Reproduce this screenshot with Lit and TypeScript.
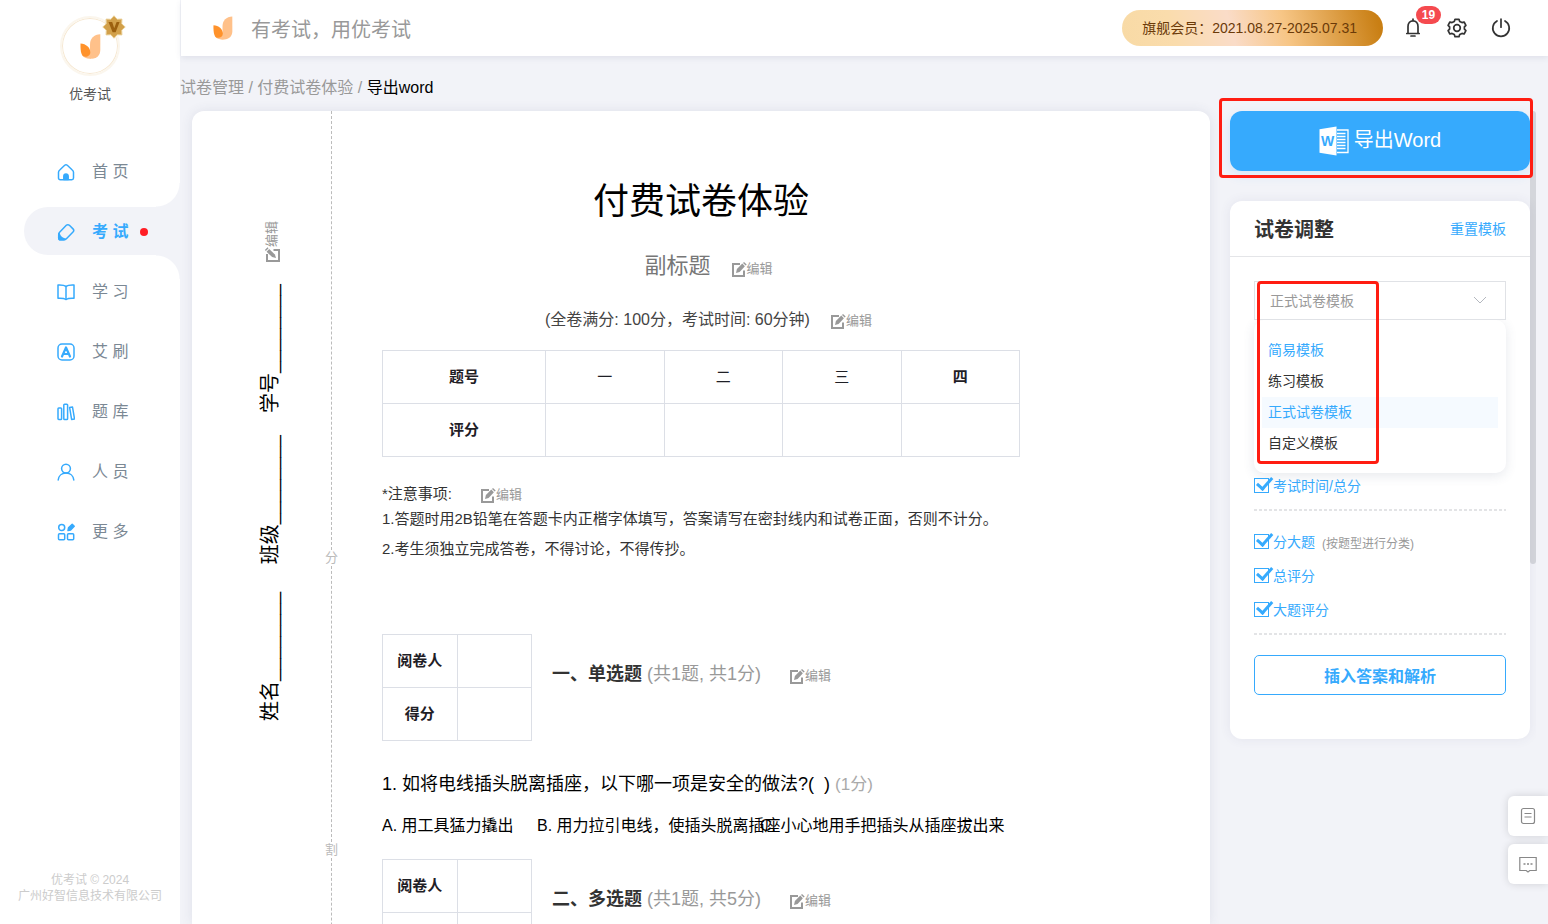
import { LitElement, html, svg, css, nothing } from "lit";
import { customElement, property } from "lit/decorators.js";
import { classMap } from "lit/directives/class-map.js";

const petals = svg`
  <path d="M20.300 0.300C14 0.500 10 4.500 10 10.500V24.500C16 25.500 20.300 21.500 20.300 16Z" fill="#ffc18a"/>
  <path d="M2 21C4 24 7 25 11 24.700L11 17Z" fill="#ffc18a"/>
  <path d="M0.500 9.500C6 9.800 10.300 13.500 10.300 18.500C10.300 21 8 22.800 5.500 22.800C1.500 22.800 0.300 18.500 0.500 9.500Z" fill="#ff922b"/>`;

const navIcons: Record<string, unknown> = {
  home: svg`<path d="M3 6.700L7.700 2.300c.8-.7 1.800-.7 2.600 0L15 6.700c.9.800 1.500 1.500 1.500 2.600V15c0 1-.8 1.700-1.700 1.700H3.200c-.9 0-1.700-.7-1.700-1.700V9.300C1.500 8.200 2.100 7.500 3 6.700z"/><path d="M6.800 16.500v-3.300a2.200 2.200 0 0 1 4.400 0v3.300z" fill="currentColor"/>`,
  exam: svg`<path d="M9.300 2.300c.9-.9 2.200-.9 3.100 0l3.600 3.600c.9.900.9 2.200 0 3.100l-6.600 6.800c-.7.700-1.500 1-2.400 1H3.800c-1.200 0-2.100-.9-2.100-2.100v-3.200c0-.9.3-1.600.9-2.200z"/><path d="M2 10.500c1 3.200 2.700 5 6.200 5.700-.6.500-1 .6-1.600.6H3.800c-1.200 0-2.100-.9-2.100-2.100z" fill="currentColor"/>`,
  learn: svg`<path d="M9 3.400C7.500 2.200 5 1.800 1 2v13.200c3.500-.2 6.200 0 8 1.300c1.800-1.300 4.500-1.500 8-1.300V2c-4-.2-6.500.2-8 1.400z"/><path d="M9 3.400V16.500"/>`,
  brush: svg`<rect x="1" y="1" width="16" height="16" rx="4"/><path d="M5 13.500L9 4.500l4 9M6.500 11h5" stroke-width="2.200"/>`,
  bank: svg`<rect x="1" y="5" width="3.600" height="11.500" rx=".8"/><rect x="6.800" y="1.200" width="3.800" height="15.300" rx=".8"/><path d="M12.600 4.400l2.900-.4 2 11.900-2.900.5z"/>`,
  people: svg`<circle cx="9" cy="5.600" r="4.400"/><path d="M1.200 17c.4-4 3.500-7 7.800-7s7.400 3 7.800 7"/>`,
  more: svg`<circle cx="4.700" cy="4.600" r="3"/><rect x="1.500" y="10.700" width="6.200" height="6" rx="1"/><rect x="10.500" y="10.700" width="6.200" height="6" rx="1"/><path d="M11 7.600l.5-2.800 3.700-3.500 2 2-3.600 3.700z" fill="currentColor"/>`,
};

const navItems = [
  ["home", "首 页"], ["exam", "考 试"], ["learn", "学 习"], ["brush", "艾 刷"],
  ["bank", "题 库"], ["people", "人 员"], ["more", "更 多"],
];

const base = css`
  * { box-sizing: border-box; }
  button { font: inherit; color: inherit; border: 0; background: none; padding: 0; cursor: pointer; }
  a { text-decoration: none; color: inherit; }
`;

@customElement("edit-button")
class EditButton extends LitElement {
  static styles = [base, css`
    :host { display: inline-block; font-size: 13px; line-height: 16px; color: #999; }
    :host(.turned) .icon { transform: rotate(90deg); }
    .edit { display: block; }
    .icon { width: 16px; height: 16px; vertical-align: -4px; }
  `];
  render() {
    return html`<button class="edit" type="button"><svg class="icon" viewBox="0 0 16 16" fill="none" stroke="currentColor" stroke-width="2"><path d="M9 3H2V15H13V9.500"/><path d="M5 12l.9-3.900L11.300 2.600l2.600 2.600L8.600 10.900z" fill="currentColor" stroke="none"/><path d="M12 1.900l1-1 2.700 2.600-1 1z" fill="currentColor" stroke="none"/></svg>编辑</button>`;
  }
}

@customElement("side-bar")
class SideBar extends LitElement {
  static styles = [base, css`
    :host { display: flex; flex-direction: column; background: #fff; }
    .brand { display: flex; flex-direction: column; align-items: center; padding-top: 16px; }
    .avatar { position: relative; width: 60px; height: 60px; border-radius: 50%; border: 2px solid #fbf6ed; box-shadow: inset 0 0 0 1px #f6e8d2; display: grid; place-items: center; }
    .flame { width: 21px; height: 25px; }
    .medal { position: absolute; right: -8px; top: -3px; width: 24px; height: 24px; }
    .name { margin-top: 8px; font-size: 14px; line-height: 20px; color: #555; }
    .nav { margin-top: 43px; display: flex; flex-direction: column; gap: 12px; flex: 1; }
    .item { position: relative; display: flex; align-items: center; height: 48px; margin-left: 24px; padding-left: 33px; font-size: 16px; color: #7b8894; }
    .icon { width: 18px; height: 18px; margin: 2px 17px 0 0; color: #36aafd; fill: none; stroke: currentColor; stroke-width: 1.5; stroke-linejoin: round; stroke-linecap: round; }
    .label { padding-bottom: 2px; }
    .active { background: #f2f3f8; border-radius: 24px 0 0 24px; color: #36aafd; font-weight: bold; }
    .active::before, .active::after { content: ""; position: absolute; right: 0; width: 24px; height: 24px; }
    .active::before { bottom: 100%; background: radial-gradient(circle at 0 0, transparent 23px, #f2f3f8 24px); }
    .active::after { top: 100%; background: radial-gradient(circle at 0 100%, transparent 23px, #f2f3f8 24px); }
    .dot { width: 8px; height: 8px; margin: 2px 0 0 12px; border-radius: 50%; background: #ff1d25; }
    .foot { padding-bottom: 20px; text-align: center; font-size: 12px; line-height: 16px; color: #ccc; }
  `];
  render() {
    return html`
      <div class="brand">
        <div class="avatar">
          <svg class="flame" viewBox="0 0 21 25">${petals}</svg>
          <svg class="medal" viewBox="0 0 24 24">
            <path d="M12 .8l3.200 3.500 4.700-.2-.2 4.700 3.500 3.200-3.500 3.200.2 4.700-4.700-.2-3.200 3.500-3.200-3.500-4.700.2.2-4.700L.8 12l3.500-3.200-.2-4.700 4.700.2z" fill="#d2a04a" stroke="#e8cc90"/>
            <path d="M6.500 7h3.700l2 6.200 2.400-6.200h3l-4 10.200h-3z" fill="#9c600f"/>
          </svg>
        </div>
        <div class="name">优考试</div>
      </div>
      <nav class="nav">
        ${navItems.map(([id, label]) => html`
          <a href="#" class=${classMap({ item: true, active: id === "exam" })}>
            <svg class="icon" viewBox="0 0 18 18">${navIcons[id]}</svg><span class="label">${label}</span>
            ${id === "exam" ? html`<span class="dot"></span>` : nothing}
          </a>`)}
      </nav>
      <div class="foot">优考试 © 2024<br>广州好智信息技术有限公司</div>`;
  }
}

@customElement("top-bar")
class TopBar extends LitElement {
  static styles = [base, css`
    :host { display: flex; align-items: center; height: 56px; margin-left: 1px; padding: 0 37px 0 32px; background: #fff; box-shadow: 0 2px 6px rgba(60, 70, 110, 0.1); position: relative; }
    .logo { width: 20px; height: 24px; }
    .slogan { margin-left: 18px; font-size: 20px; color: #999; flex: 1; }
    .vip { height: 36px; line-height: 37px; padding: 0 26px 0 20px; border-radius: 18px; font-size: 14px; color: #6b3a08; background: linear-gradient(75deg, #f8daa5, #fadcac 20%, #fadcc8 42%, #f7c686 62%, #c97f14 97%); }
    .tools { display: flex; align-items: center; gap: 24px; margin-left: 20px; }
    .tool { position: relative; display: block; width: 20px; height: 20px; color: #333; }
    .glyph { width: 20px; height: 20px; fill: none; stroke: currentColor; stroke-width: 1.7; stroke-linecap: round; stroke-linejoin: round; display: block; }
    .count { position: absolute; left: 13px; top: -12px; width: 25px; height: 18px; border-radius: 9px; background: #f54a4f; color: #fff; font-size: 12px; line-height: 18px; font-weight: bold; }
  `];
  render() {
    return html`
      <svg class="logo" viewBox="0 0 21 25">${petals}</svg>
      <div class="slogan">有考试，用优考试</div>
      <div class="vip">旗舰会员：2021.08.27-2025.07.31</div>
      <div class="tools">
        <button class="tool" type="button" aria-label="通知"><svg class="glyph" viewBox="0 0 20 20"><path d="M10 1v1.800M3.800 15.500h12.400M5 15.500V8.500c0-3.300 2.200-5.700 5-5.700s5 2.400 5 5.700v7M8 18h4"/></svg><span class="count">19</span></button>
        <button class="tool" type="button" aria-label="设置"><svg class="glyph" viewBox="0 0 20 20"><circle cx="10" cy="10" r="3.300"/><path d="M8 1.300h4l.7 2.100 2.300 1.200 2.100-.6 1.800 3.300-1.500 1.600v2.200l1.500 1.600-1.800 3.300-2.100-.6-2.300 1.200-.7 2.100H8l-.7-2.100L5 15.400l-2.100.6-1.800-3.300 1.500-1.600V8.900L1.100 7.300 2.900 4l2.100.6 2.300-1.200z"/></svg></button>
        <button class="tool" type="button" aria-label="退出"><svg class="glyph" viewBox="0 0 20 20"><path d="M10 1.200v8M6 3a8.200 8.200 0 1 0 8 0"/></svg></button>
      </div>`;
  }
}

@customElement("exam-paper")
class ExamPaper extends LitElement {
  static styles = [base, css`
    :host { display: flex; background: #fff; border-radius: 12px 12px 0 0; box-shadow: 0 0 12px rgba(60, 70, 110, 0.1); color: #333; }
    .strip { flex: none; width: 132px; display: flex; flex-direction: column; align-items: center; padding: 110px 0 0 27px; }
    .turned { writing-mode: vertical-rl; text-orientation: sideways; transform: rotate(180deg); white-space: pre; }
    .fields { margin: 21px 4px 0 0; font-size: 20px; line-height: 28px; color: #000; }
    .seal { flex: none; width: 15px; display: flex; flex-direction: column; align-items: center; font-size: 13px; line-height: 16px; color: #bbb; }
    .dash { flex: none; height: 276px; border-left: 1px dashed #bbb; }
    .first { height: 439px; }
    .doc { flex: 1; min-width: 0; padding: 64px 190px 0 43px; }
    .title { margin: 0; font-size: 36px; line-height: 54px; font-weight: normal; text-align: center; color: #000; }
    .row { display: flex; align-items: baseline; justify-content: center; gap: 20px; padding-left: 15px; white-space: nowrap; }
    .sub { margin-top: 21px; font-size: 22px; line-height: 32px; color: #777; }
    .info { margin-top: 26px; font-size: 16px; line-height: 24px; color: #444; }
    .grid { width: 100%; border-collapse: collapse; table-layout: fixed; font-size: 15px; color: #1f2026; }
    .grid th, .grid td { height: 53px; padding: 0 0 4px; border: 1px solid #dcdfe6; text-align: center; }
    .summary { margin-top: 18px; }
    .lead { width: 163px; }
    .grid .plain { font-weight: normal; }
    .notes { margin-top: 27px; font-size: 15px; line-height: 30px; }
    .notes-head { display: flex; align-items: baseline; gap: 28px; line-height: 20px; }
    .line { margin: 0; }
    .section { display: flex; align-items: center; gap: 20px; margin-top: 21px; }
    .after-notes { margin-top: 70px; }
    .marks { flex: none; width: 150px; }
    .heading { display: flex; align-items: baseline; gap: 28px; font-size: 18px; line-height: 24px; padding-bottom: 28px; white-space: nowrap; }
    .name { margin: 0; font-size: 18px; font-weight: bold; }
    .pts { font-weight: normal; color: #999; }
    .question { margin: 29px 0 0; font-size: 18px; line-height: 28px; color: #000; white-space: pre; }
    .score { font-size: 17px; color: #aaa; }
    .choices { display: grid; grid-template-columns: 155px 223px auto; margin: 15px 0 0; padding: 0; list-style: none; font-size: 16px; line-height: 24px; color: #000; white-space: nowrap; }
    .choice { min-width: 0; }
  `];
  section(name: string, points: string, first: boolean) {
    return html`
      <div class=${classMap({ section: true, "after-notes": first })}>
        <table class="grid marks">
          <tr><th>阅卷人</th><td></td></tr>
          <tr><th>得分</th><td></td></tr>
        </table>
        <div class="heading"><h2 class="name">${name} <span class="pts">${points}</span></h2><edit-button></edit-button></div>
      </div>`;
  }
  render() {
    return html`
      <div class="strip">
        <edit-button class="turned"></edit-button>
        <div class="turned fields">${"姓名________     班级________    学号________"}</div>
      </div>
      <div class="seal"><i class="dash first"></i>分<i class="dash"></i>割<i class="dash"></i></div>
      <div class="doc">
        <h1 class="title">付费试卷体验</h1>
        <div class="row sub"><span>副标题</span><edit-button></edit-button></div>
        <div class="row info"><span>(全卷满分: 100分，考试时间: 60分钟)</span><edit-button></edit-button></div>
        <table class="grid summary">
          <tr><th class="lead">题号</th>${["一", "二", "三", "四"].map((n) => html`<th class=${classMap({ plain: n !== "四" })}>${n}</th>`)}</tr>
          <tr><th>评分</th><td></td><td></td><td></td><td></td></tr>
        </table>
        <div class="notes">
          <div class="notes-head"><span>*注意事项:</span><edit-button></edit-button></div>
          <p class="line">1.答题时用2B铅笔在答题卡内正楷字体填写，答案请写在密封线内和试卷正面，否则不计分。</p>
          <p class="line">2.考生须独立完成答卷，不得讨论，不得传抄。</p>
        </div>
        ${this.section("一、单选题", "(共1题, 共1分)", true)}
        <p class="question">1. 如将电线插头脱离插座，以下哪一项是安全的做法?(&nbsp; ) <span class="score">(1分)</span></p>
        <ol class="choices">
          <li class="choice">A. 用工具猛力撬出</li>
          <li class="choice">B. 用力拉引电线，使插头脱离插座</li>
          <li class="choice">C. 小心地用手把插头从插座拔出来</li>
        </ol>
        ${this.section("二、多选题", "(共1题, 共5分)", false)}
      </div>`;
  }
}

@customElement("check-row")
class CheckRow extends LitElement {
  @property() label = "";
  @property() note = "";
  static styles = [base, css`
    :host { display: block; height: 34px; }
    .row { display: flex; align-items: center; height: 24px; font-size: 14px; color: #36aafd; }
    .box { appearance: none; margin: 0 4px 0 0; width: 15px; height: 15px; border: 1px solid #36aafd; position: relative; }
    .box:checked::after { content: ""; position: absolute; left: 5px; top: -3px; width: 13px; height: 6px; border: solid #36aafd; border-width: 0 0 3px 3px; transform: rotate(-48deg); transform-origin: 50% 100%; }
    .note { margin-left: 7px; padding-top: 2px; font-size: 12px; color: #999; }
  `];
  render() {
    return html`<label class="row"><input class="box" type="checkbox" checked>${this.label}${this.note ? html`<span class="note">${this.note}</span>` : nothing}</label>`;
  }
}

@customElement("export-panel")
class ExportPanel extends LitElement {
  static styles = [base, css`
    :host { display: block; }
    .wrap { position: relative; }
    .mark { position: absolute; border: 3px solid #ff1d12; border-radius: 4px; pointer-events: none; z-index: 2; }
    .mark-export { inset: -13px -3px -7px -11px; }
    .mark-menu { left: 3px; top: 0; width: 122px; bottom: 9px; }
    .export { width: 100%; height: 60px; border-radius: 12px; background: #36aafd; color: #fff; font-size: 20px; display: flex; align-items: center; justify-content: center; gap: 5px; box-shadow: 0 4px 12px rgba(54, 170, 253, 0.16); }
    .caption { padding-bottom: 5px; }
    .word { width: 30px; height: 30px; }
    .w { font: bold 14px "Liberation Sans", sans-serif; fill: #36aafd; }
    .card { margin-top: 30px; border-radius: 12px; background: #fff; box-shadow: 0 0 12px rgba(60, 70, 110, 0.08); }
    .head { display: flex; align-items: center; justify-content: space-between; height: 56px; padding: 0 24px; border-bottom: 1px solid #e4e5e8; }
    .title { margin: 0; font-size: 20px; color: #333; }
    .reset { padding-bottom: 2px; font-size: 14px; color: #36aafd; }
    .body { padding: 24px 24px 44px; }
    .field { position: relative; display: block; }
    .select { appearance: none; display: block; width: 100%; height: 39px; padding: 0 15px; border: 1px solid #e0e2e6; border-radius: 0; background: #fff; font: inherit; font-size: 14px; color: #999; }
    .arrow { position: absolute; right: 19px; top: 14px; width: 14px; height: 10px; fill: none; stroke: #b4b8bf; pointer-events: none; }
    .menu { margin: 0; padding: 15px 8px 14px; list-style: none; border-radius: 10px; background: #fff; box-shadow: 0 3px 12px rgba(60, 70, 110, 0.12); font-size: 14px; line-height: 31px; color: #333; }
    .opt { padding-left: 6px; }
    .blue { color: #36aafd; }
    .chosen { background: #f5faff; }
    .group::after { content: ""; display: block; height: 2px; margin-top: 2px; background: repeating-linear-gradient(90deg, #e3e4e6 0 3px, transparent 3px 5px); }
    .group + .group { padding-top: 18px; }
    .insert { display: block; width: 100%; height: 40px; margin-top: 20px; border: 1px solid #36aafd; border-radius: 5px; color: #36aafd; font-size: 16px; font-weight: bold; }
  `];
  render() {
    return html`
      <div class="wrap">
        <button class="export" type="button">
          <svg class="word" viewBox="0 0 30 30">
            <path d="M0.500 3.300L17.500 .500V29.500L0.500 26.700z" fill="#fff"/>
            <path d="M18 4h11v22.500H18M18 7.500h8.500M18 10.500h8.500M18 13.500h8.500M18 16.500h8.500M18 19.500h8.500M18 22.500h8.500" fill="none" stroke="#fff" stroke-width="1.300"/>
            <text class="w" x="2" y="20">W</text>
          </svg><span class="caption">导出Word</span></button>
        <div class="mark mark-export"></div>
      </div>
      <section class="card">
        <div class="head"><h2 class="title">试卷调整</h2><a class="reset" href="#">重置模板</a></div>
        <div class="body">
          <div class="wrap">
            <label class="field">
              <select class="select" aria-label="模板"><option>正式试卷模板</option></select>
              <svg class="arrow" viewBox="0 0 14 10"><path d="M1 2l6 6 6-6"/></svg>
            </label>
            <ul class="menu">
              <li class="opt blue">简易模板</li>
              <li class="opt">练习模板</li>
              <li class="opt blue chosen">正式试卷模板</li>
              <li class="opt">自定义模板</li>
            </ul>
            <div class="mark mark-menu"></div>
          </div>
          <div class="group"><check-row label="考试时间/总分"></check-row></div>
          <div class="group">
            <check-row label="分大题" note="(按题型进行分类)"></check-row>
            <check-row label="总评分"></check-row>
            <check-row label="大题评分"></check-row>
          </div>
          <button class="insert" type="button">插入答案和解析</button>
        </div>
      </section>`;
  }
}

@customElement("app-root")
class AppRoot extends LitElement {
  static styles = [base, css`
    :host { display: grid; grid-template-columns: 180px minmax(0, 1fr); height: 100vh; overflow: hidden; background: #f2f3f8; font-family: "Liberation Sans", "Noto Sans CJK SC", sans-serif; }
    .main { display: flex; flex-direction: column; min-height: 0; }
    .crumbs { padding: 20px 0 12px; font-size: 16px; line-height: 23px; color: #999; }
    .here { color: #000; }
    .work { flex: 1; min-height: 0; display: flex; padding: 0 12px; clip-path: inset(-14px 12px 0 0); }
    .paper { flex: 1; min-width: 0; }
    .panel { flex: none; width: 300px; margin-left: 20px; position: relative; z-index: 1; }
    .bar { flex: none; width: 6px; height: 453px; border-radius: 3px; background: #d4d6db; }
    .float { position: fixed; right: 0; bottom: 40px; display: flex; flex-direction: column; gap: 8px; }
    .tab { width: 40px; height: 40px; display: grid; place-items: center; background: #fff; border-radius: 6px 0 0 6px; box-shadow: 0 0 8px rgba(0, 0, 0, 0.14); }
    .glyph { width: 18px; height: 18px; fill: none; stroke: #888; stroke-width: 1.2; }
  `];
  render() {
    return html`
      <side-bar></side-bar>
      <main class="main">
        <top-bar></top-bar>
        <div class="crumbs"><a href="#">试卷管理</a> / <a href="#">付费试卷体验</a> / <span class="here">导出word</span></div>
        <div class="work">
          <exam-paper class="paper"></exam-paper>
          <export-panel class="panel"></export-panel>
          <div class="bar"></div>
        </div>
      </main>
      <div class="float">
        <button class="tab" type="button" aria-label="记录"><svg class="glyph" viewBox="0 0 18 18"><rect x="2.500" y="1.500" width="13" height="15" rx="2"/><path d="M5.500 6.500h7M5.500 10h7"/></svg></button>
        <button class="tab" type="button" aria-label="消息"><svg class="glyph" viewBox="0 0 18 18"><path d="M.800 2.500h16.400v13H10.800L9 17l-1.800-1.500H.800z"/><path d="M4.500 9h2M8 9h2M11.500 9h2" stroke-width="1.500"/></svg></button>
      </div>`;
  }
}
